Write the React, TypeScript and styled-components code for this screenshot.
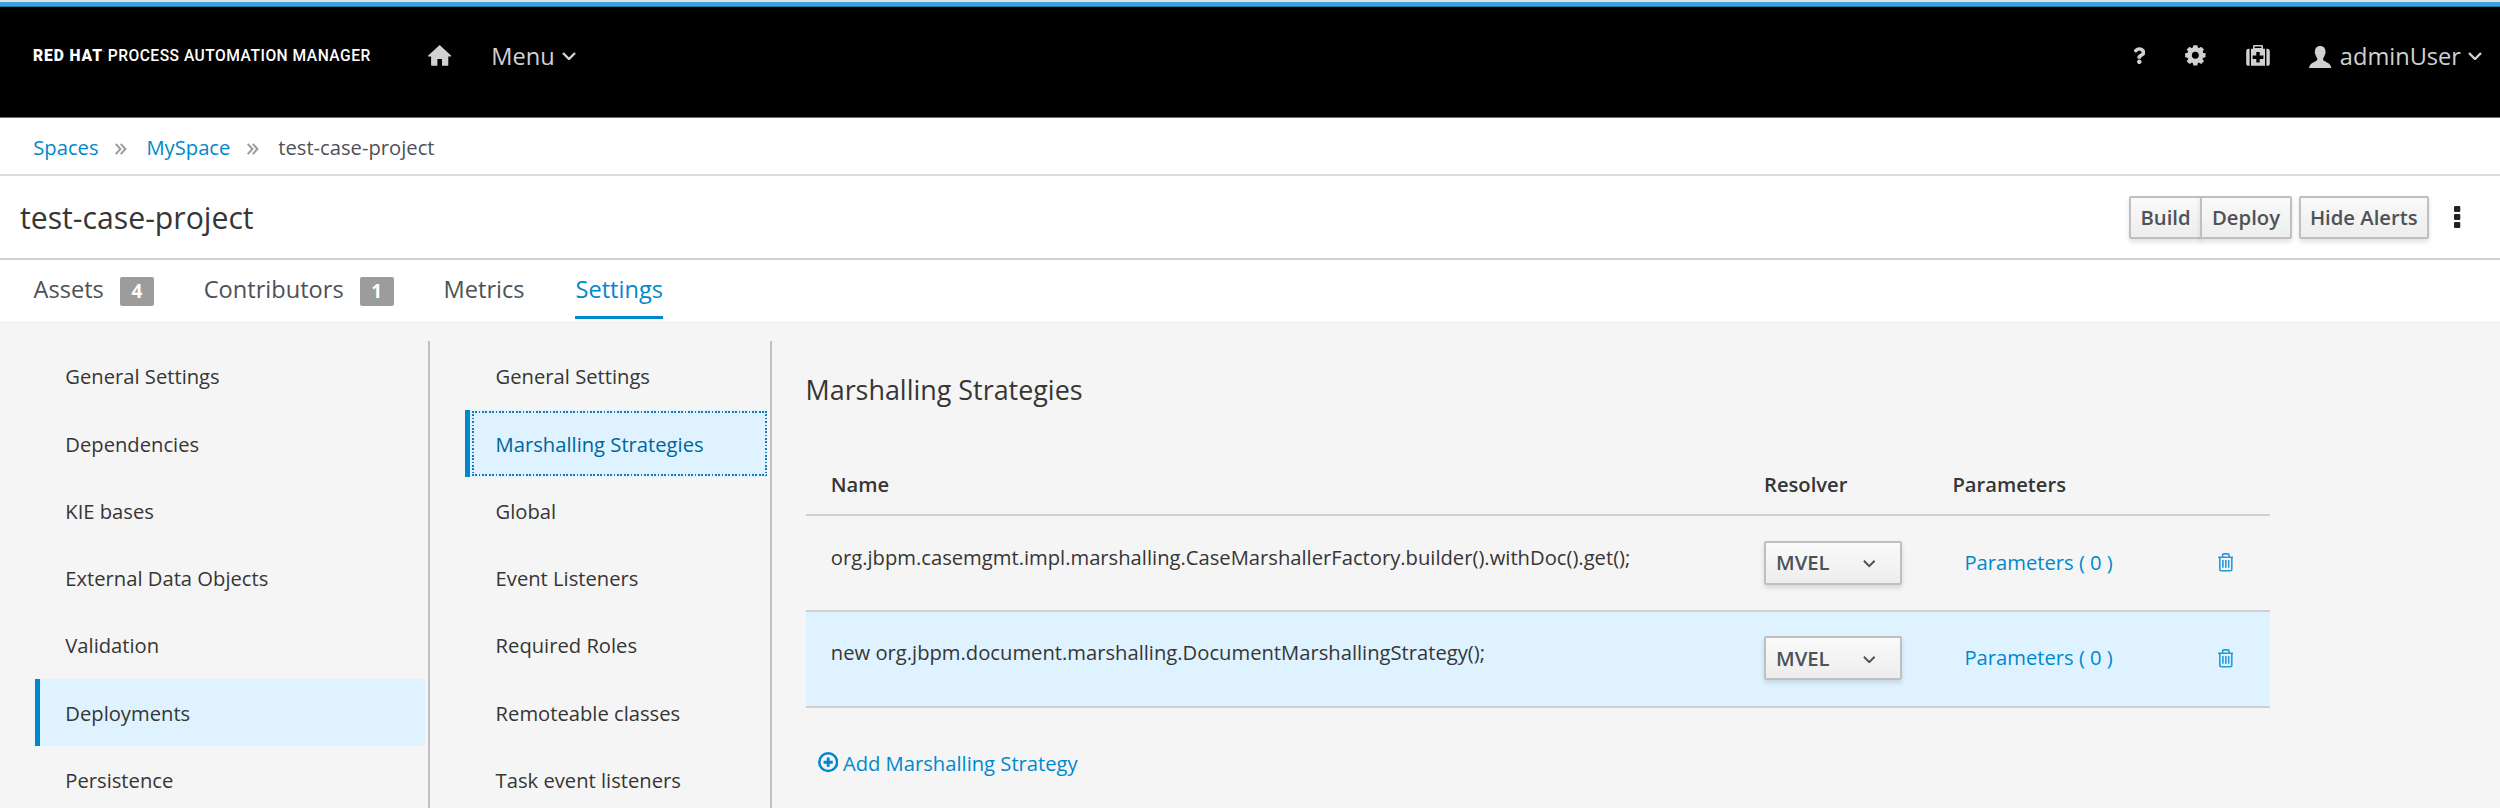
import React from "react";
import styled, { createGlobalStyle, css } from "styled-components";
import { FaQuestion } from "react-icons/fa";

const GlobalStyle = createGlobalStyle`
  * { box-sizing: border-box; }
  html, body { margin: 0; padding: 0; }
  body {
    font-family: "Open Sans", "Noto Sans", sans-serif;
    font-size: 20.2px;
    line-height: 28px;
    color: #363636;
    background: #fff;
    overflow: hidden;
  }
  svg { display: block; flex: none; }
`;

const Page = styled.div`
  height: 808px;
  display: flex;
  flex-direction: column;
  overflow: hidden;
  white-space: nowrap;
`;

/* Masthead */
const Masthead = styled.header`
  flex: none;
  height: 118px;
  border-top: 2px solid #e0e0e0;
  border-bottom: 1px solid #6f6c6f;
  background: #000;
`;

const AccentStripe = styled.div`
  height: 5px;
  background: linear-gradient(#39a5dc 80%, #2379a5 80%);
`;

const Navbar = styled.nav`
  height: 97px;
  padding: 0 18px 0 33px;
  display: flex;
  align-items: center;
  color: #d1d1d1;
  font-size: 23.6px;
  line-height: 32px;
`;

const Logo = styled.svg`
  width: 338px;
  height: 20px;
  font-family: Roboto, "Open Sans", sans-serif;
  font-size: 15.6px;
  fill: #fff;
`;

const HomeButton = styled.a`
  margin-left: 56.5px;
`;

const MenuToggle = styled.a`
  display: flex;
  align-items: center;
  gap: 7px;
  margin-left: 40.3px;
`;

const Utilities = styled.div`
  display: flex;
  align-items: center;
  gap: 39.8px;
  margin-left: auto;
`;

const HelpIcon = styled(FaQuestion)`
  width: 12.6px;
  height: 17.5px;
`;

const UserToggle = styled(MenuToggle)`
  margin-left: 0;
  & > svg:first-child { margin: 2px 1px 0 0; }
`;

/* Breadcrumb */
const Breadcrumb = styled.div`
  flex: none;
  height: 58px;
  padding: 2px 0 0 33.3px;
  border-bottom: 2px solid #dcdcdc;
  display: flex;
  align-items: center;
  color: #4d5258;
`;

const Link = styled.a`
  color: #0088ce;
`;

const Separator = styled.span`
  width: 47.9px;
  display: flex;
  justify-content: center;
  padding: 3px 3px 0 0;
`;

/* Title bar */
const TitleBar = styled.div`
  flex: none;
  height: 84px;
  padding: 0 39.5px 0 20px;
  border-bottom: 2px solid #d2d2d2;
  display: flex;
  align-items: center;
`;

const Title = styled.h1`
  margin: 0 auto 0 0;
  padding-top: 2px;
  font-size: 30.2px;
  line-height: 42px;
  font-weight: 400;
`;

const raised = css`
  border: 2px solid #bfbfbf;
  border-radius: 2px;
  background: linear-gradient(#fafafa, #ededed);
  box-shadow: 0 3px 5px rgba(3, 3, 3, 0.12);
  color: #4d5258;
  font: 600 20.25px/28px "Open Sans", sans-serif;
`;

const Button = styled.button`
  ${raised}
  height: 43px;
  padding: 0 0 1px;
`;

const ButtonGroup = styled.div`
  display: flex;
  margin-right: 6.5px;
  ${Button}:first-child { width: 73px; border-radius: 2px 0 0 2px; }
  ${Button}:last-child { width: 92px; margin-left: -2px; border-radius: 0 2px 2px 0; }
`;

const AlertsButton = styled(Button)`
  width: 130.5px;
`;

const Kebab = styled.svg`
  margin-left: 25px;
`;

/* Tabs */
const Tabs = styled.div`
  flex: none;
  height: 63px;
  padding: 10px 0 0 33.5px;
  border-bottom: 1px solid #ececec;
  display: flex;
  gap: 50.9px;
  color: #4d5258;
  font-size: 23.6px;
  line-height: 39px;
`;

const Tab = styled.a<{ $active?: boolean }>`
  height: 49px;
  display: flex;
  ${(p) => p.$active && css`
    color: #0088ce;
    border-bottom: 3px solid #0088ce;
  `}
`;

const Badge = styled.span`
  width: 34px;
  height: 28.5px;
  margin: 7px -1px 0 16px;
  border-radius: 2px;
  background: #9c9c9c;
  color: #fff;
  font-size: 19px;
  font-weight: 700;
  line-height: 28.5px;
  text-align: center;
`;

/* Body */
const Body = styled.main`
  flex: 1;
  min-height: 0;
  padding-top: 18px;
  background: #f5f5f5;
  display: flex;
`;

const SideNav = styled.div<{ $width: number; $indent: number }>`
  flex: none;
  width: ${(p) => p.$width}px;
  padding: 1.3px 3px 0 ${(p) => p.$indent}px;
  border-right: 2px solid #bfbfbf;
`;

const focusDots = css`
  &::after {
    content: "";
    position: absolute;
    inset: 1px 0 1px 1.5px;
    --x: repeating-linear-gradient(90deg, #1b78b0 0 1.7px, transparent 1.7px 3.375px);
    --y: repeating-linear-gradient(#1b78b0 0 1.7px, transparent 1.7px 3.375px);
    background:
      var(--x) top / 100% 2px no-repeat,
      var(--x) bottom / 100% 2px no-repeat,
      var(--y) left / 2px 100% no-repeat,
      var(--y) right / 2px 100% no-repeat;
  }
`;

const SideItem = styled.a<{ $active?: boolean; $focused?: boolean }>`
  position: relative;
  display: flex;
  align-items: center;
  height: 67.25px;
  padding: 1px 0 0 25.3px;
  border-left: 5px solid transparent;
  ${(p) => p.$active && css`
    border-left-color: #0088ce;
    background: #def3ff;
    background-clip: padding-box;
  `}
  ${(p) => p.$focused && css`
    color: #00659c;
    ${focusDots}
  `}
`;

const Content = styled.section`
  padding-left: 33.5px;
`;

const Heading = styled.h2`
  margin: 30px 0 0;
  font-size: 26.9px;
  line-height: 38px;
  font-weight: 400;
`;

/* Strategy table */
const columns = css`
  display: grid;
  grid-template-columns: 933.2px 188.4px 264px 1fr;
  padding-left: 25.3px;
`;

const Table = styled.div`
  width: 1464.5px;
  margin-top: 58px;
`;

const HeaderRow = styled.div`
  ${columns}
  height: 49px;
  padding-top: 3px;
  border-bottom: 2px solid #d1d1d1;
  font-weight: 600;
`;

const Row = styled.div<{ $striped?: boolean }>`
  ${columns}
  height: 95.8px;
  padding-top: 24.7px;
  border-bottom: 2px solid #d1d1d1;
  background: ${(p) => (p.$striped ? "#def3ff" : "transparent")};
`;

const NameCell = styled.div`
  padding-top: 2px;
`;

const Select = styled.div`
  ${raised}
  width: 138px;
  height: 44px;
  padding: 0 24px 1px 10px;
  display: flex;
  align-items: center;
  justify-content: space-between;
  & > svg { margin-top: 2px; }
`;

const ParamsLink = styled(Link)`
  padding: 7px 0 0 12px;
`;

const TrashButton = styled.a`
  padding: 12.5px 0 0 1.2px;
`;

const AddLink = styled(Link)`
  display: flex;
  align-items: center;
  gap: 5px;
  margin: 41px 0 0 12px;
`;

const Caret = ({ size = 14, width = 2.4 }: { size?: number; width?: number }) => (
  <svg width={size} height={size * 0.7} viewBox="0 0 14 9.8" fill="none" stroke="currentColor" strokeWidth={width}>
    <path d="M1 2 L7 8 L13 2" />
  </svg>
);

const DoubleAngle = () => (
  <svg width="11.5" height="12" viewBox="0 0 11.5 12" fill="none" stroke="#9c9c9c" strokeWidth="2">
    <path d="M.8 .9 L5.4 6 L.8 11.1 M5.8 .9 L10.4 6 L5.8 11.1" />
  </svg>
);

const HomeIcon = () => (
  <svg width="23.4" height="21" viewBox="0 0 23.4 21" fill="currentColor">
    <path d="M11.7 0 L23.2 10.6 Q23.8 11.6 22.6 11.6 L20.3 11.6 L20.3 20 Q20.3 20.8 19.5 20.8 L14 20.8 L14 14 L9.4 14 L9.4 20.8 L3.9 20.8 Q3.1 20.8 3.1 20 L3.1 11.6 L.8 11.6 Q-.4 11.6 .2 10.6 Z" />
  </svg>
);

const GearIcon = () => (
  <svg width="20.7" height="20.7" viewBox="-10.35 -10.35 20.7 20.7">
    <circle r="5.8" fill="none" stroke="currentColor" strokeWidth="4.6" />
    {[0, 45, 90, 135, 180, 225, 270, 315].map((a) => (
      <path key={a} d="M-2.7 -7 L-2 -10.2 L2 -10.2 L2.7 -7 Z" fill="currentColor" transform={`rotate(${a})`} />
    ))}
  </svg>
);

const KitIcon = () => (
  <svg width="24" height="21" viewBox="0 0 24 21" fill="currentColor">
    <path d="M3.6 3.8 V20.8 H2.8 Q.2 20.8 .2 18.2 V6.4 Q.2 3.8 2.8 3.8 Z M20.4 3.8 H21.2 Q23.8 3.8 23.8 6.4 V18.2 Q23.8 20.8 21.2 20.8 H20.4 Z" />
    <path fillRule="evenodd" d="M5 3.8 H7 V1.4 Q7 0 8.4 0 H15.6 Q17 0 17 1.4 V3.8 H19 V20.8 H5 Z M8.6 1.6 V3 H15.4 V1.6 Z M10.3 6.9 V10.6 H6.6 V14 H10.3 V17.6 H13.7 V14 H17.4 V10.6 H13.7 V6.9 Z" />
  </svg>
);

const UserIcon = () => (
  <svg width="22.4" height="22" viewBox="0 0 22.4 22" fill="currentColor">
    <path d="M11.2 0 C14.8 0 16.5 2.3 16.4 5.6 C16.9 6.2 16.6 8 15.9 8.4 C15.5 10.4 14.8 11.3 14.2 12.2 V14 C15.6 16 21.8 16.6 22.4 22 H0 C.6 16.6 6.8 16 8.2 14 V12.2 C7.6 11.3 6.9 10.4 6.5 8.4 C5.8 8 5.5 6.2 6 5.6 C5.9 2.3 7.6 0 11.2 0 Z" />
  </svg>
);

const TrashIcon = () => (
  <svg width="15.6" height="18.6" viewBox="0 0 15.6 18.6" fill="none" stroke="#259bd8" strokeWidth="1.6">
    <path d="M0 4.2 H15.6 M4.6 4 V2.1 Q4.6 .9 5.8 .9 H9.8 Q11 .9 11 2.1 V4" />
    <path d="M1.8 4.4 V16.3 Q1.8 17.7 3.2 17.7 H12.4 Q13.8 17.7 13.8 16.3 V4.4" />
    <path d="M4.9 7 V14.8 M7.8 7 V14.8 M10.7 7 V14.8" />
  </svg>
);

const PlusCircle = () => (
  <svg width="20.4" height="20.4" viewBox="0 0 20.4 20.4" fill="none" stroke="currentColor">
    <circle cx="10.2" cy="10.2" r="8.9" strokeWidth="2.5" />
    <path d="M10.2 5.6 V14.8 M5.6 10.2 H14.8" strokeWidth="2.9" />
  </svg>
);

const projectSettings = ["General Settings", "Dependencies", "KIE bases", "External Data Objects", "Validation", "Deployments", "Persistence"];
const deploymentSettings = ["General Settings", "Marshalling Strategies", "Global", "Event Listeners", "Required Roles", "Remoteable classes", "Task event listeners"];
const strategies = [
  "org.jbpm.casemgmt.impl.marshalling.CaseMarshallerFactory.builder().withDoc().get();",
  "new org.jbpm.document.marshalling.DocumentMarshallingStrategy();",
];

export default function App() {
  return (
    <Page>
      <GlobalStyle />
      <Masthead>
        <AccentStripe />
        <Navbar>
          <Logo viewBox="0 0 338 20">
            <text x="0" y="15.2" fontWeight="900" textLength="69" lengthAdjust="spacing">RED HAT</text>
            <text x="69.6" y="7.2" fontSize="3.4" opacity="0.7">™</text>
            <text x="74.7" y="15.2" fontWeight="500" textLength="262.6" lengthAdjust="spacing">PROCESS AUTOMATION MANAGER</text>
          </Logo>
          <HomeButton><HomeIcon /></HomeButton>
          <MenuToggle>Menu<Caret /></MenuToggle>
          <Utilities>
            <HelpIcon />
            <GearIcon />
            <KitIcon />
            <UserToggle><UserIcon />adminUser<Caret /></UserToggle>
          </Utilities>
        </Navbar>
      </Masthead>

      <Breadcrumb>
        <Link>Spaces</Link>
        <Separator><DoubleAngle /></Separator>
        <Link>MySpace</Link>
        <Separator><DoubleAngle /></Separator>
        <span>test-case-project</span>
      </Breadcrumb>

      <TitleBar>
        <Title>test-case-project</Title>
        <ButtonGroup>
          <Button>Build</Button>
          <Button>Deploy</Button>
        </ButtonGroup>
        <AlertsButton>Hide Alerts</AlertsButton>
        <Kebab width="6.5" height="22" viewBox="0 0 6.5 22" fill="#222">
          <rect width="6.3" height="6" rx="1.3" />
          <rect y="8" width="6.3" height="6" rx="1.3" />
          <rect y="16" width="6.3" height="6" rx="1.3" />
        </Kebab>
      </TitleBar>

      <Tabs>
        <Tab>Assets<Badge>4</Badge></Tab>
        <Tab>Contributors<Badge>1</Badge></Tab>
        <Tab>Metrics</Tab>
        <Tab $active>Settings</Tab>
      </Tabs>

      <Body>
        <SideNav $width={430} $indent={35}>
          {projectSettings.map((s) => (
            <SideItem key={s} $active={s === "Deployments"}>{s}</SideItem>
          ))}
        </SideNav>
        <SideNav $width={342} $indent={35.3}>
          {deploymentSettings.map((s) => (
            <SideItem key={s} $active={s === "Marshalling Strategies"} $focused={s === "Marshalling Strategies"}>{s}</SideItem>
          ))}
        </SideNav>
        <Content>
          <Heading>Marshalling Strategies</Heading>
          <Table>
            <HeaderRow>
              <span>Name</span>
              <span>Resolver</span>
              <span>Parameters</span>
            </HeaderRow>
            {strategies.map((s, i) => (
              <Row key={s} $striped={i % 2 === 1}>
                <NameCell>{s}</NameCell>
                <Select>MVEL<Caret size={12.5} width={2.2} /></Select>
                <ParamsLink>Parameters ( 0 )</ParamsLink>
                <TrashButton><TrashIcon /></TrashButton>
              </Row>
            ))}
          </Table>
          <AddLink><PlusCircle />Add Marshalling Strategy</AddLink>
        </Content>
      </Body>
    </Page>
  );
}
